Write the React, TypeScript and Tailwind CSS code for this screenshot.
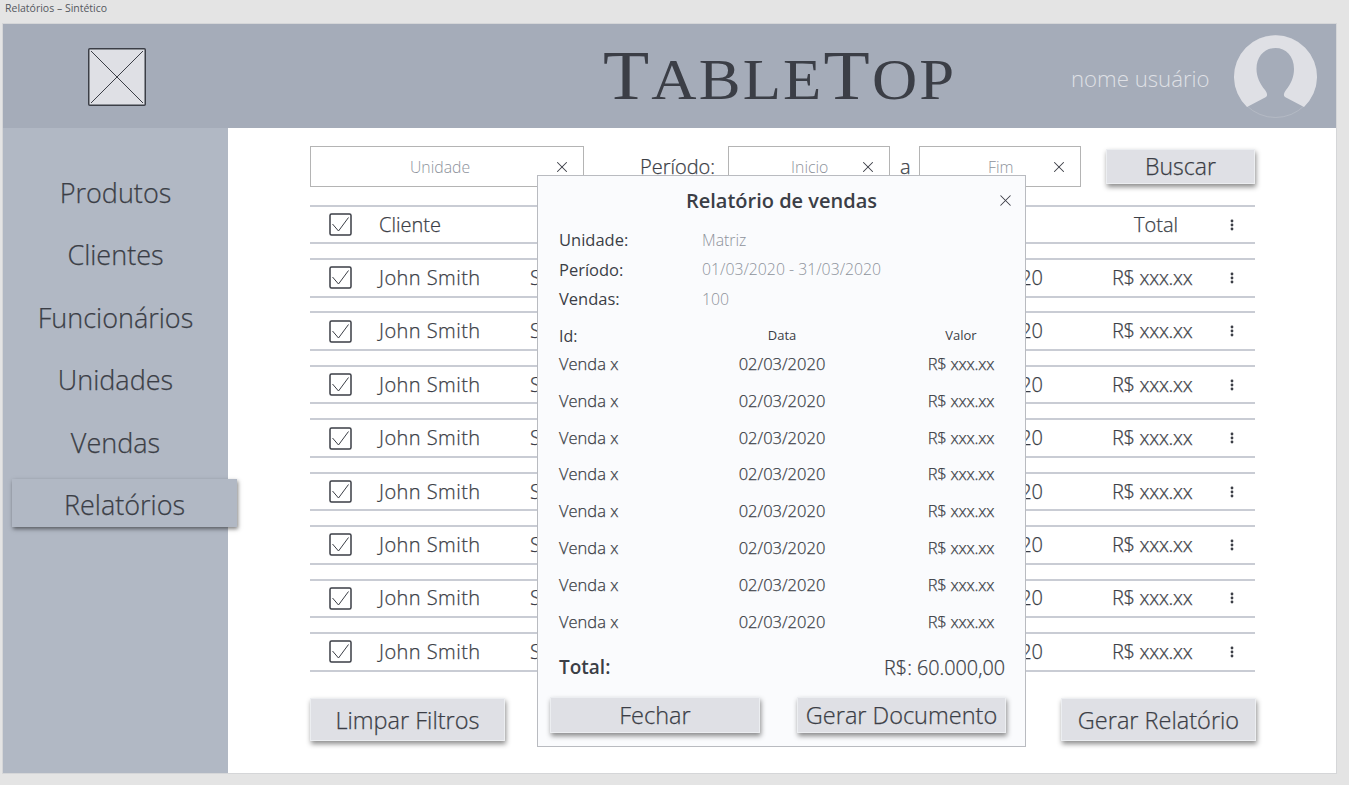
import React from "react";
import { X } from "lucide-react";

const font = "font-['Open_Sans','Liberation_Sans',sans-serif]";
// Open Sans light is thinner than the reference text, so it gets a hairline stroke
const lightText = "font-light [-webkit-text-stroke:0.25px]";
const navItems = ["Produtos", "Clientes", "Funcionários", "Unidades", "Vendas"];
const rowIds = [0, 1, 2, 3, 4, 5, 6, 7];
const saleIds = [0, 1, 2, 3, 4, 5, 6, 7];

const CheckBox = () => (
  <svg width="23" height="23" viewBox="0 0 23 23" className="shrink-0">
    <rect x="1" y="1" width="21" height="21" rx="1.5" fill="none" stroke="#3b3e46" strokeWidth="1.5" />
    <path d="M3.5 11 L9.5 18 L19.5 4.5" fill="none" stroke="#3b3e46" strokeWidth="1" />
  </svg>
);

const Dots = () => (
  <svg width="4" height="12" viewBox="0 0 4 12">
    <circle cx="2" cy="2" r="1.4" fill="#3b3e46" />
    <circle cx="2" cy="6" r="1.4" fill="#3b3e46" />
    <circle cx="2" cy="10" r="1.4" fill="#3b3e46" />
  </svg>
);

const Button = ({ label, className }: { label: string; className: string }) => (
  <div
    className={`flex items-center justify-center bg-[#dfe0e5] border border-[#eceef1] ${lightText} text-[#3b3e46] shadow-[1px_3px_5px_rgba(0,0,0,0.45)] ${className}`}
  >
    {label}
  </div>
);

const SearchBox = ({ label, className, labelClass }: { label: string; className: string; labelClass: string }) => (
  <div className={`relative h-[41px] pt-[3px] border border-[#b4b4b4] bg-white flex items-center ${className}`}>
    <span className={`font-light text-[15.8px] text-[#8d929b] ${labelClass}`}>{label}</span>
    <X size={18} strokeWidth={1.4} className="absolute right-[12px] top-[11px] text-[#3b3e46]" />
  </div>
);

const TableRow = () => (
  <div className={`flex items-center h-[39.5px] border-t-2 border-b-2 border-[#c9ccd4] text-[#3b3e46] ${lightText} text-[20px]`}>
    <div className="ml-[19px] w-[50px]">
      <CheckBox />
    </div>
    <span className="w-[151px] tracking-[0.45px]">John Smith</span>
    <span className="w-[403px]">Smith</span>
    <span className="w-[110px] text-right whitespace-nowrap">02/03/2020</span>
    <span className="ml-[69px] w-[82px] whitespace-nowrap tracking-[-0.3px]">R$ xxx.xx</span>
    <div className="ml-[36px]">
      <Dots />
    </div>
  </div>
);

const Modal = () => (
  <div className="absolute left-[537px] top-[175px] w-[489px] h-[572px] bg-[#fafbfd] border border-[#b9bbc0] text-[#3b3e46]">
    <div className="relative h-[50px] flex items-center justify-center">
      <span className="text-[20px] font-semibold">Relatório de vendas</span>
      <X size={19} strokeWidth={1.3} className="absolute right-[10px] top-[15px] text-[#3b3e46]" />
    </div>
    <div className="pl-[21px] flex flex-col">
      {[
        ["Unidade:", "Matriz"],
        ["Período:", "01/03/2020 - 31/03/2020"],
        ["Vendas:", "100"],
      ].map(([name, value]) => (
        <div key={name} className="flex items-center h-[29.5px]">
          <span className="w-[143px] text-[16.5px] font-medium">{name}</span>
          <span className="text-[15.8px] font-light text-[#8d929b]">{value}</span>
        </div>
      ))}
    </div>
    <div className="flex items-center h-[20.5px] mt-[11px] pl-[21px]">
      <span className="w-[179px] text-[16px] font-medium">Id:</span>
      <span className="w-[88px] text-center text-[13px] font-medium">Data</span>
      <span className="ml-[95px] w-[80px] text-center text-[13px] font-medium">Valor</span>
    </div>
    <div className="flex flex-col">
      {saleIds.map((id) => (
        <div key={id} className={`flex items-center h-[36.8px] pl-[21px] ${lightText} text-[16.5px]`}>
          <span className="w-[179px]">Venda x</span>
          <span className="w-[88px] text-center whitespace-nowrap">02/03/2020</span>
          <span className="ml-[95px] w-[80px] text-center whitespace-nowrap tracking-[-0.2px]">R$ xxx.xx</span>
        </div>
      ))}
    </div>
    <div className="flex items-center justify-between h-[38px] mt-[8px] pl-[21px] pr-[20px]">
      <span className="text-[19px] font-semibold">Total:</span>
      <span className={`text-[19.8px] ${lightText}`}>R$: 60.000,00</span>
    </div>
    <div className="flex justify-between mt-[11px] pl-[12px] pr-[19px]">
      <Button label="Fechar" className="w-[210px] h-[36px] pt-[1px] text-[23.5px]" />
      <Button label="Gerar Documento" className="w-[209px] h-[36px] pt-[1px] text-[23.5px] whitespace-nowrap" />
    </div>
  </div>
);

export default function App() {
  return (
    <div className={`relative w-[1349px] h-[785px] overflow-hidden bg-[#e4e4e4] ${font}`}>
      <div className="h-[24px] pl-[5px] pt-[1px] text-[10.5px] text-[#55585f]">Relatórios – Sintético</div>
      <div className="ml-[3px] w-[1333px] h-[749px] flex flex-col bg-white outline outline-1 outline-[#d5d6d8]">
        <header className="h-[104px] shrink-0 flex items-center bg-[#a5acb9]">
          <div className="ml-[85px] mt-[1px] w-[58px] h-[58px] shrink-0">
            <svg width="58" height="58" viewBox="0 0 58 58">
              <rect x="0.75" y="0.75" width="56.5" height="56.5" rx="1" fill="#dfe0e5" stroke="#3b3e46" strokeWidth="1.5" />
              <path d="M3 3 L55 55 M55 3 L3 55" stroke="#3b3e46" strokeWidth="1" />
            </svg>
          </div>
          <div className="ml-[457px] w-[360px] shrink-0 origin-left scale-x-[1.08] font-['Liberation_Serif',serif] text-[#3b3e46] whitespace-nowrap tracking-[2px] leading-none">
            <span className="text-[70px]">T</span>
            <span className="text-[58px]">ABLE</span>
            <span className="text-[70px]">T</span>
            <span className="text-[58px]">OP</span>
          </div>
          <span className="ml-[108px] mt-[5px] w-[139px] shrink-0 text-[22.2px] font-light text-[#dfe0e5] whitespace-nowrap">
            nome usuário
          </span>
          <div className="ml-[24px] mt-[1px] w-[84px] h-[84px] shrink-0">
            <svg width="84" height="84" viewBox="0 0 84 84">
              <circle cx="41.5" cy="41.5" r="41" fill="#a5acb9" stroke="#c2c6cf" strokeWidth="0.5" />
              <path
                d="M13 72 A41.5 41.5 0 1 1 70 72 L51 62 C49 60 50 58 52 55 C57 49 60 42 60 34 C60 21 52 13 41.5 13 C31 13 22.5 21 22.5 34 C22.5 42 26 49 31 55 C33 58 34 60 32 62 Z"
                fill="#dfe0e5"
              />
            </svg>
          </div>
        </header>
        <div className="flex flex-1 min-h-0">
          <aside className={`relative w-[225px] shrink-0 bg-[#b1b8c4] pt-[34px] text-[#3b3e46] ${lightText} text-[27px]`}>
            {navItems.map((item) => (
              <div key={item} className="h-[62.4px] flex items-center justify-center whitespace-nowrap">
                {item}
              </div>
            ))}
            <div className="ml-[9px] w-[225px] h-[48px] mt-[5px] pt-[5px] flex items-center justify-center bg-[#b1b8c4] shadow-[1px_2px_4px_rgba(0,0,0,0.5)] relative">
              Relatórios
            </div>
          </aside>
          <main className="pl-[82px] w-[1108px] pt-[18px] text-[#3b3e46]">
            <div className="flex items-start w-[945px]">
              <SearchBox label="Unidade" className="w-[274px] justify-start" labelClass="ml-[99px]" />
              <span className={`ml-[56px] mt-[6px] text-[20px] ${lightText}`}>Período:</span>
              <SearchBox label="Inicio" className="ml-[13px] w-[162px]" labelClass="ml-[62px]" />
              <span className={`ml-[10px] mt-[6px] w-[19px] text-[20px] ${lightText}`}>a</span>
              <SearchBox label="Fim" className="w-[162px]" labelClass="ml-[68px]" />
              <Button label="Buscar" className="ml-[25px] mt-[3px] w-[149px] h-[35px] text-[23px]" />
            </div>
            <div className={`mt-[18px] w-[945px] flex items-center h-[39px] border-t-2 border-b-2 border-[#c9ccd4] ${lightText}`}>
              <div className="ml-[19px] w-[50px]">
                <CheckBox />
              </div>
              <span className="text-[20px]">Cliente</span>
              <span className="ml-auto text-[20px]">Total</span>
              <div className="ml-[52px] mr-[21px]">
                <Dots />
              </div>
            </div>
            <div className="mt-[14px] w-[945px] flex flex-col gap-[13.95px]">
              {rowIds.map((id) => (
                <TableRow key={id} />
              ))}
            </div>
            <div className="mt-[26px] w-[946px] flex justify-between">
              <Button label="Limpar Filtros" className="w-[195px] h-[43px] pt-[3px] text-[23.5px]" />
              <Button label="Gerar Relatório" className="w-[195px] h-[43px] pt-[3px] text-[23.5px]" />
            </div>
          </main>
        </div>
      </div>
      <Modal />
    </div>
  );
}
